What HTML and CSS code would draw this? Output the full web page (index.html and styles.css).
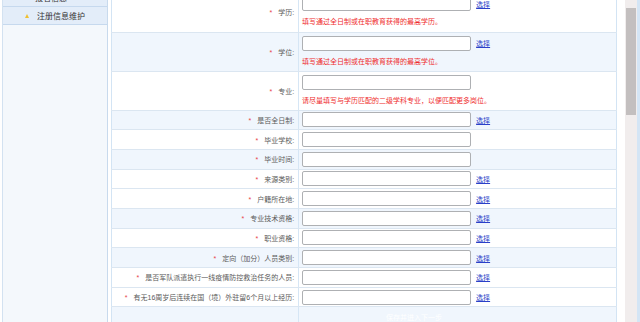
FILE: index.html
```html
<!DOCTYPE html>
<html lang="zh-CN">
<head>
    <meta charset="UTF-8">
    <title>报名信息填写</title>
    <link rel="stylesheet" href="styles.css">
</head>
<body>
    <div class="page">
        <!-- 左侧菜单 -->
        <div class="sidebar">
            <div class="menu-item menu-cut">报名信息</div>
            <div class="menu-item"><span class="dot"></span>注册信息维护</div>
        </div>

        <!-- 报名表 -->
        <div class="main">
            <table class="form-table">
                <tr class="tall">
                    <td class="label"><span class="req">*</span>学历:</td>
                    <td class="field">
                        <input type="text" class="ipt"><a href="#" class="pick">选择</a>
                        <div class="hint">填写通过全日制或在职教育获得的最高学历。</div>
                    </td>
                </tr>
                <tr class="tall alt">
                    <td class="label"><span class="req">*</span>学位:</td>
                    <td class="field">
                        <input type="text" class="ipt"><a href="#" class="pick">选择</a>
                        <div class="hint">填写通过全日制或在职教育获得的最高学位。</div>
                    </td>
                </tr>
                <tr class="tall">
                    <td class="label"><span class="req">*</span>专业:</td>
                    <td class="field">
                        <input type="text" class="ipt">
                        <div class="hint">请尽量填写与学历匹配的二级学科专业，以便匹配更多岗位。</div>
                    </td>
                </tr>
                <tr class="alt">
                    <td class="label"><span class="req">*</span>是否全日制:</td>
                    <td class="field"><input type="text" class="ipt"><a href="#" class="pick">选择</a></td>
                </tr>
                <tr>
                    <td class="label"><span class="req">*</span>毕业学校:</td>
                    <td class="field"><input type="text" class="ipt"></td>
                </tr>
                <tr class="alt">
                    <td class="label"><span class="req">*</span>毕业时间:</td>
                    <td class="field"><input type="text" class="ipt"></td>
                </tr>
                <tr>
                    <td class="label"><span class="req">*</span>来源类别:</td>
                    <td class="field"><input type="text" class="ipt"><a href="#" class="pick">选择</a></td>
                </tr>
                <tr>
                    <td class="label"><span class="req">*</span>户籍所在地:</td>
                    <td class="field"><input type="text" class="ipt"><a href="#" class="pick">选择</a></td>
                </tr>
                <tr class="alt">
                    <td class="label"><span class="req">*</span>专业技术资格:</td>
                    <td class="field"><input type="text" class="ipt"><a href="#" class="pick">选择</a></td>
                </tr>
                <tr>
                    <td class="label"><span class="req">*</span>职业资格:</td>
                    <td class="field"><input type="text" class="ipt"><a href="#" class="pick">选择</a></td>
                </tr>
                <tr class="alt">
                    <td class="label"><span class="req">*</span>定向（加分）人员类别:</td>
                    <td class="field"><input type="text" class="ipt"><a href="#" class="pick">选择</a></td>
                </tr>
                <tr>
                    <td class="label"><span class="req">*</span>是否军队派遣执行一线疫情防控救治任务的人员:</td>
                    <td class="field"><input type="text" class="ipt"><a href="#" class="pick">选择</a></td>
                </tr>
                <tr>
                    <td class="label"><span class="req">*</span>有无16周岁后连续在国（境）外驻留6个月以上经历:</td>
                    <td class="field"><input type="text" class="ipt"><a href="#" class="pick">选择</a></td>
                </tr>
                <tr class="alt btn-row">
                    <td class="label"></td>
                    <td class="field"><span class="btn-text">保存并进入下一步</span></td>
                </tr>
            </table>
        </div>

        <!-- 滚动条 -->
        <div class="scroll">
            <div class="thumb"></div>
        </div>
    </div>
</body>
</html>
```

FILE: styles.css
```css
/* 基础样式 */
body {
    margin: 0;
    background: #fff;
    font-family: "Liberation Sans", "Noto Sans CJK SC", sans-serif;
    font-size: 7px;
    color: #444;
    overflow: hidden;
}

.page {
    display: flex;
    height: 322px;
    overflow: hidden;
}

/* 左侧菜单 */
.sidebar {
    width: 105px;
    margin-left: 2px;
    border-left: 1px solid #d3e2f1;
    border-right: 1px solid #c8daed;
    background: #f4f8fc;
}

.menu-item {
    display: flex;
    align-items: center;
    height: 17px;
    padding-left: 22px;
    background: #e3edf9;
    border-bottom: 1px solid #c6d9ee;
    font-size: 8px;
    color: #333;
}

.menu-cut {
    height: 14px;
    margin-top: -8px;
    padding-left: 32px;
    align-items: flex-start;
}

.dot {
    width: 0;
    height: 0;
    margin-right: 8px;
    border-left: 2px solid transparent;
    border-right: 2px solid transparent;
    border-bottom: 4px solid #f0c030;
}

/* 表格 */
.main {
    width: 506px;
    margin-left: 3px;
}

.form-table {
    width: 506px;
    margin-top: -7px;
    border-collapse: collapse;
    border-left: 1px solid #d3e4f4;
    border-right: 1px solid #d3e4f4;
}

.form-table tr {
    height: 19.7px;
    background: #fff;
}

.form-table tr.alt {
    background: #f0f6fd;
}

.form-table tr.tall {
    height: 39px;
}

.form-table td {
    padding: 0;
    border-bottom: 1px solid #dbe6f1;
}

.label {
    width: 182px;
    padding-right: 4px !important;
    text-align: right;
    vertical-align: middle;
    border-right: 1px solid #d6e6f5;
    white-space: nowrap;
    color: #5a5a5a;
}

.req {
    color: #e8434a;
    margin-right: 6px;
}

.field {
    padding-left: 3px !important;
    vertical-align: middle;
    white-space: nowrap;
}

.tall .field {
    vertical-align: top;
    padding-top: 3px !important;
}

.ipt {
    box-sizing: border-box;
    width: 169px;
    height: 15px;
    margin: 0;
    padding: 0 2px;
    border: 1px solid #aeb0b3;
    border-radius: 2px;
    background: #fff;
    vertical-align: middle;
}

.pick {
    margin-left: 5px;
    color: #2a3fc8;
    font-size: 7px;
    vertical-align: middle;
}

.hint {
    margin-top: 6px;
    line-height: 9px;
    color: #ef2c2c;
}

.btn-row .field {
    vertical-align: top;
    padding-top: 5px !important;
}

.btn-text {
    margin-left: 84px;
    color: #fff;
    font-size: 7px;
}

/* 滚动条 */
.scroll {
    width: 12px;
    margin-left: 8px;
    background: #f1eded;
    border-right: 3px solid #d4e5f5;
}

.thumb {
    width: 10px;
    height: 107px;
    margin: 8px 0 0 1px;
    background: #c3bfbf;
}
```
